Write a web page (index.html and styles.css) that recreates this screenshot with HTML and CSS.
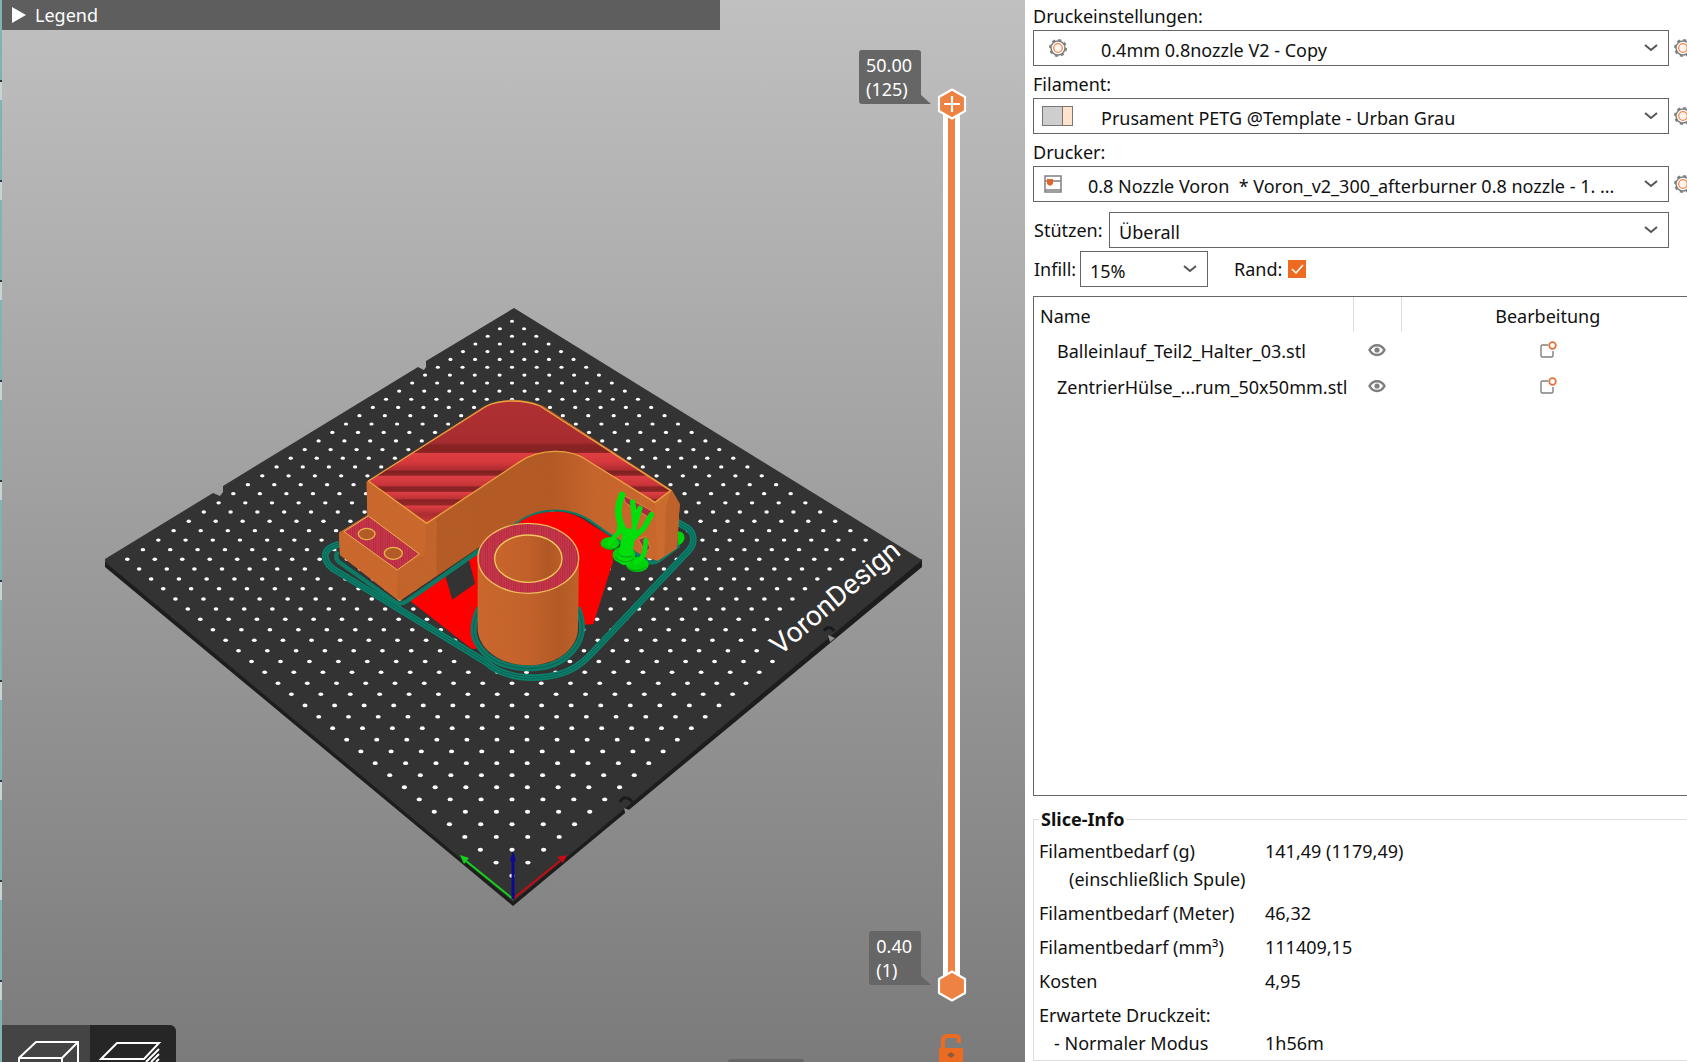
FILE: index.html
```
<!DOCTYPE html>
<html lang="de">
<head>
  <meta charset="UTF-8">
  <meta name="viewport" content="width=device-width, initial-scale=1">
  <title>Slicer</title>
  <link rel="stylesheet" href="styles.css">
</head>
<body>
  <main class="viewport">
    <svg class="scene" viewBox="0 0 1025 1062" preserveAspectRatio="xMidYMid slice">
      <defs>
        <linearGradient id="infill" gradientUnits="userSpaceOnUse" x1="0" y1="60" x2="0" y2="430">
          <stop offset="0" stop-color="#b03033"/>
          <stop offset=".34" stop-color="#a82c2f"/>
          <stop offset=".37" stop-color="#882324"/>
          <stop offset=".425" stop-color="#882324"/>
          <stop offset=".43" stop-color="#dd3e42"/>
          <stop offset=".5" stop-color="#d8393d"/>
          <stop offset=".57" stop-color="#a92c2f"/>
          <stop offset=".575" stop-color="#7d1f20"/>
          <stop offset=".61" stop-color="#8d2527"/>
          <stop offset=".62" stop-color="#dd3e42"/>
          <stop offset=".69" stop-color="#c93539"/>
          <stop offset=".71" stop-color="#8a2325"/>
          <stop offset=".74" stop-color="#8a2325"/>
          <stop offset=".75" stop-color="#dd3e42"/>
          <stop offset=".8" stop-color="#bd3235"/>
          <stop offset=".81" stop-color="#8a2325"/>
          <stop offset=".85" stop-color="#952729"/>
          <stop offset=".86" stop-color="#dd3e42"/>
          <stop offset=".93" stop-color="#a92c2f"/>
          <stop offset="1" stop-color="#d8393d"/>
        </linearGradient>
        <linearGradient id="wall" x1="0" x2="1" y1="0" y2="0">
          <stop offset="0" stop-color="#c96a2e"/>
          <stop offset=".28" stop-color="#b25925"/>
          <stop offset=".62" stop-color="#b05724"/>
          <stop offset=".75" stop-color="#c4622b"/>
          <stop offset="1" stop-color="#c8672c"/>
        </linearGradient>
        <linearGradient id="tube" x1="0" x2="1" y1="0" y2="0">
          <stop offset="0" stop-color="#c8652c"/>
          <stop offset=".5" stop-color="#c1602a"/>
          <stop offset=".8" stop-color="#b05724"/>
          <stop offset="1" stop-color="#bb5f29"/>
        </linearGradient>
        <pattern id="stripes" width="7" height="7" patternUnits="userSpaceOnUse">
          <rect width="7" height="7" fill="#d0354a"/>
          <rect width="3" height="7" fill="#a82e40"/>
        </pattern>
        <pattern id="layers" width="6" height="6" patternUnits="userSpaceOnUse" patternTransform="rotate(32)">
          <rect width="6" height="2" fill="#e08a3c" fill-opacity=".15"/>
        </pattern>
      </defs>

      <!-- Build plate -->
      <path d="M105 560v7l408 339 409-339v-8L514 888z" fill="#1d1d1d"/>
      <path d="M514 308l-88 53v6l-2 3-6-3-195 119v6l-3 4-7-3-108 66v3l408 340 409-342z" fill="#333"/>
      <path d="M824 631c3-5 8-4 10 0M620 802c3-6 9-5 12 0" fill="none" stroke="#1b1b1b" stroke-width="3"/>
      <path d="M828 635l2 7 5-4zM624 808l2 8 6-5z" fill="#8e8e8e"/>
      <g id="holes" fill="#fff"></g>
      <text class="plate-name" transform="translate(780 656) rotate(-40)">VoronDesign</text>

      <!-- Sliced parts, drawn at three times their size -->
      <g transform="translate(310 380) scale(.3333)">
        <g fill="none" stroke-linejoin="round">
          <path d="M88 492C52 502 44 515 46 530c2 20 12 32 34 43L530 848c60 58 210 62 285 0 14-12 25-21 35-33L1138 510c18-22 16-50-5-66l-32-18" stroke="#0b7f6a" stroke-width="20"/>
          <path d="M88 492C52 502 44 515 46 530c2 20 12 32 34 43L530 848c60 58 210 62 285 0 14-12 25-21 35-33L1138 510c18-22 16-50-5-66l-32-18" stroke="#0a5c4e" stroke-width="9"/>
          <path d="M88 492C52 502 44 515 46 530c2 20 12 32 34 43L530 848c60 58 210 62 285 0 14-12 25-21 35-33L1138 510c18-22 16-50-5-66l-32-18" stroke="#0b7f6a" stroke-width="5"/>
        </g>
        <path d="M300 662L480 535l125-105c60-40 150-50 210-15l94 60v70l-59 187-40 4-310 70h-15z" fill="#f00"/>
        <path d="M405 586l72-47 18 72-68 48z" fill="#333"/>
        <path d="M84 515c-8 12-8 22 4 32L258 668c12 6 20 4 32-4L508 512l102-80c60-50 160-60 230-14l70 50 94 72c14 10 30 10 44 0l60-45" fill="none" stroke="#0d7a66" stroke-width="13"/>

        <path d="M170 305L520 80c50-26 120-28 180-2L1085 330l24 42-8 132-58 38-40-10-103-72-60-42c-60-38-140-40-205-2L270 662 90 525l-3-67 85-52z" fill="url(#wall)"/>
        <path d="M170 305l180 125-4 96-83 44v90L90 525l-3-67 85-52z" fill="#c8662c"/>
        <path d="M350 430l-4 96-83 44 7 92 110-75V412z" fill="#c0622a"/>
        <path d="M1035 367l50-37 24 42-8 132-58 38z" fill="#ca6a2e"/>
        <path d="M1068 378l-5 148 38-24 8-130-24-42z" fill="#bd602a"/>
        <path d="M170 305L520 80c50-26 120-28 180-2L1085 330l24 42-8 132-58 38-40-10-103-72-60-42c-60-38-140-40-205-2L270 662 90 525l-3-67 85-52z" fill="url(#layers)"/>
        <path d="M175 303L530 78c40-20 110-20 160 0l392 254-47 35-205-127c-50-35-140-35-200 5L350 430z" fill="url(#infill)" stroke="#e9a040" stroke-width="4"/>
        <path d="M102 455l73-47 153 114-66 48z" fill="url(#stripes)" stroke="#e9b050" stroke-width="3"/>
        <g fill="#b25b26" stroke="#eab24e" stroke-width="4">
          <ellipse cx="170" cy="462" rx="25" ry="17"/>
          <ellipse cx="250" cy="520" rx="27" ry="18"/>
        </g>

        <!-- Centering sleeve -->
        <path d="M505 690c-25 60-18 95 25 135 60 50 180 55 240 5 48-40 57-85 35-140z" fill="#333" stroke="#0d7a66" stroke-width="18"/>
        <path d="M505 690c-25 60-18 95 25 135 60 50 180 55 240 5 48-40 57-85 35-140" fill="none" stroke="#0b5f51" stroke-width="3"/>
        <path d="M503 535v215c5 60 70 106 152 106s144-46 149-106l3-215z" fill="url(#tube)"/>
        <path d="M503 535v215c5 60 70 106 152 106s144-46 149-106l3-215z" fill="url(#layers)"/>
        <ellipse cx="655" cy="535" rx="151" ry="105" fill="url(#stripes)" stroke="#efbd5c" stroke-width="4"/>
        <ellipse cx="655" cy="536" rx="101" ry="71" fill="url(#tube)" stroke="#efc95c" stroke-width="4"/>

        <!-- Organic supports -->
        <path d="M938 345l88 48v25l-80-50zM985 478l22-8 14 35-14 12z" fill="#a92c45" stroke="#e9a040" stroke-width="2"/>
        <g fill="#00d20a">
          <ellipse cx="900" cy="490" rx="28" ry="19"/>
          <ellipse cx="942" cy="525" rx="34" ry="26"/>
          <ellipse cx="982" cy="553" rx="34" ry="23"/>
          <path d="M1104 454c24 0 28 34 0 42z"/>
        </g>
        <g fill="none" stroke="#00df0c" stroke-linecap="round" stroke-linejoin="round">
          <path d="M936 345c-12 28-14 60-4 85l22 50-8 50" stroke-width="20"/>
          <path d="M968 366c6 40 8 60 4 90l-24 60M990 385l-14 45M1024 404l-22 40-36 34" stroke-width="16"/>
          <path d="M898 488l28-30 4-30M975 548c25-10 32-30 32-68" stroke-width="14"/>
          <path d="M956 465l-12 70" stroke-width="40"/>
        </g>
        <path d="M880 500c12 10 30 10 42 2M915 532c16 16 40 18 58 4M952 562c18 14 42 12 56-2M922 520c10 12 30 14 44 8" fill="none" stroke="#079a10" stroke-width="3"/>
      </g>

      <!-- Axes -->
      <g fill="none" stroke-width="2">
        <path d="M513 899l-47-38" stroke="#12d21c"/>
        <path d="M513 899l47-38" stroke="#c80a14"/>
        <path d="M513 899v-40" stroke="#0a0a96" stroke-width="3"/>
      </g>
      <path d="M460 855l9 3-5 6z" fill="#12d21c"/>
      <path d="M567 855l-10 2 6 6z" fill="#c80a14"/>
      <path d="M513 851l-3 10h6z" fill="#0a0a96"/>
    </svg>

    <div class="window-edge"></div>
    <button class="legend-bar" type="button"><span class="arrow"></span>Legend</button>

    <div class="layer-slider">
      <div class="track"></div>
      <input class="lower" type="range" min="1" max="125" value="1" aria-label="Untere Schicht">
      <input class="upper" type="range" min="1" max="125" value="125" aria-label="Obere Schicht">
      <output class="tip tip-top">50.00<br>(125)</output>
      <output class="tip tip-bottom">0.40<br>(1)</output>
    </div>
    <button class="lock" type="button" aria-label="Sperre">
      <svg viewBox="0 0 26 28">
        <path d="M5 15V6q0-4 4-4h8q4 0 4 4v3" fill="none" stroke="#ed6b21" stroke-width="4"/>
        <rect x="1" y="14" width="24" height="14" fill="#ed6b21"/>
        <path d="M9 21l4-3 4 3-4 3z" fill="#8a5a3c"/>
      </svg>
    </button>

    <div class="view-switch">
      <button type="button" aria-label="3D-Ansicht">
        <svg viewBox="0 0 88 37"><path d="M17 50V33L34 17H76V50M17 33H60V50M60 33L76 17" fill="none" stroke="#fff" stroke-width="2"/></svg>
      </button>
      <button class="active" type="button" aria-label="Vorschau">
        <svg viewBox="0 0 86 37"><path d="M11 34L27 18H69L54 34zM56 37L69 24M61 37L69 29M66 37l3-3" fill="none" stroke="#fff" stroke-width="2"/></svg>
      </button>
    </div>
    <div class="moves-tab"></div>
  </main>

  <aside class="panel">
    <svg class="symbols">
      <symbol id="gear" viewBox="0 0 18 18">
        <circle cx="9" cy="9" r="7" fill="none" stroke="#808080" stroke-width="1.5"/>
        <circle cx="9" cy="9" r="8" fill="none" stroke="#808080" stroke-width="2" stroke-dasharray="3.14 3.14"/>
        <circle cx="9" cy="9" r="4.3" fill="#fff4ec" stroke="#ed8b55" stroke-width="1.3"/>
      </symbol>
      <symbol id="chevron" viewBox="0 0 16 10">
        <path d="M2 2l6 5 6-5" fill="none" stroke="#555" stroke-width="2"/>
      </symbol>
      <symbol id="eye" viewBox="0 0 18 14">
        <path d="M1.5 7C5 .5 13 .5 16.5 7 13 13.5 5 13.5 1.5 7z" fill="none" stroke="#808080" stroke-width="2.5"/>
        <circle cx="9" cy="7" r="2.6" fill="#808080"/>
      </symbol>
      <symbol id="edit" viewBox="0 0 18 18">
        <path d="M9 4H3.5Q2 4 2 5.5v9Q2 16 3.5 16h9q1.500 0 1.500-1.500V10" fill="none" stroke="#808080" stroke-width="1.4"/>
        <circle cx="13.5" cy="4.5" r="3.3" fill="#fff" stroke="#e0753c" stroke-width="1.8"/>
      </symbol>
    </svg>

    <div class="field">
      <label for="print">Druckeinstellungen:</label>
      <div class="row">
        <div class="combo">
          <svg class="icon"><use href="#gear"/></svg>
          <select id="print"><option>0.4mm 0.8nozzle V2 - Copy</option></select>
          <svg class="chevron"><use href="#chevron"/></svg>
        </div>
        <button class="gear" type="button" aria-label="Druckeinstellungen bearbeiten"><svg><use href="#gear"/></svg></button>
      </div>
    </div>
    <div class="field">
      <label for="filament">Filament:</label>
      <div class="row">
        <div class="combo">
          <span class="swatch"></span>
          <select id="filament"><option>Prusament PETG @Template - Urban Grau</option></select>
          <svg class="chevron"><use href="#chevron"/></svg>
        </div>
        <button class="gear" type="button" aria-label="Filament bearbeiten"><svg><use href="#gear"/></svg></button>
      </div>
    </div>
    <div class="field">
      <label for="printer">Drucker:</label>
      <div class="row">
        <div class="combo printer">
          <svg class="icon" viewBox="0 0 18 18">
            <path d="M1 1h16v16H1zM1 6h16M1 15h16" fill="none" stroke="#808080" stroke-width="1.5"/>
            <path d="M3 4h6v5L6 11 3 9z" fill="#e0662c"/>
          </svg>
          <select id="printer"><option>0.8 Nozzle Voron&nbsp; * Voron_v2_300_afterburner 0.8 nozzle - 1. ...</option></select>
          <svg class="chevron"><use href="#chevron"/></svg>
        </div>
        <button class="gear" type="button" aria-label="Drucker bearbeiten"><svg><use href="#gear"/></svg></button>
      </div>
    </div>

    <div class="line supports">
      <label for="supports">Stützen:</label>
      <div class="combo plain">
        <select id="supports"><option>Überall</option></select>
        <svg class="chevron"><use href="#chevron"/></svg>
      </div>
    </div>
    <div class="line infill">
      <label for="infill-amount">Infill:</label>
      <div class="combo plain">
        <select id="infill-amount"><option>15%</option></select>
        <svg class="chevron"><use href="#chevron"/></svg>
      </div>
      <label class="brim">Rand: <input type="checkbox" checked></label>
    </div>

    <div class="objects">
      <table>
        <thead>
          <tr><th class="name">Name</th><th class="visible"></th><th>Bearbeitung</th></tr>
        </thead>
        <tbody>
          <tr>
            <td class="name">Balleinlauf_Teil2_Halter_03.stl</td>
            <td><svg class="eye"><use href="#eye"/></svg></td>
            <td><svg class="edit"><use href="#edit"/></svg></td>
          </tr>
          <tr>
            <td class="name">ZentrierHülse_...rum_50x50mm.stl</td>
            <td><svg class="eye"><use href="#eye"/></svg></td>
            <td><svg class="edit"><use href="#edit"/></svg></td>
          </tr>
        </tbody>
      </table>
    </div>

    <fieldset class="slice-info">
      <legend>Slice-Info</legend>
      <dl>
        <dt>Filamentbedarf (g)<span class="spool">(einschließlich Spule)</span></dt><dd>141,49 (1179,49)</dd>
        <dt>Filamentbedarf (Meter)</dt><dd>46,32</dd>
        <dt>Filamentbedarf (mm³)</dt><dd>111409,15</dd>
        <dt>Kosten</dt><dd>4,95</dd>
        <dt>Erwartete Druckzeit:<span class="mode">- Normaler Modus</span></dt><dd class="last">1h56m</dd>
      </dl>
    </fieldset>
  </aside>

  <script>
    // Holes of the plate: a 29 x 29 grid seen in perspective
    const holes = document.getElementById('holes');
    const count = 29;

    for (let i = 0; i < count; i++) {
      for (let j = 0; j < count; j++) {
        // the plate name takes the end of the last two rows
        if (j > 26 && i < 10) continue;
        const w = 1 - 0.004425 * (i + j);
        const hole = document.createElementNS('http://www.w3.org/2000/svg', 'ellipse');
        hole.setAttribute('cx', 512 + 12.037 * (j - i) / w);
        hole.setAttribute('cy', (321.3 + 6.025 * (i + j)) / w);
        hole.setAttribute('rx', 2 / w);
        hole.setAttribute('ry', 1.5 / w);
        holes.appendChild(hole);
      }
    }
  </script>
</body>
</html>
```
FILE: styles.css
```
* {
  box-sizing: border-box;
}
body {
  margin: 0;
  height: 100vh;
  display: grid;
  grid-template-columns: 1025fr 662fr;
  font-family: "Noto Sans", "Open Sans", sans-serif;
  font-size: 18px;
  line-height: 28px;
  color: #111;
  background: #fff;
  overflow: hidden;
}
button {
  border: none;
  padding: 0;
  background: none;
  font: inherit;
  cursor: pointer;
}
svg {
  display: block;
}

/* 3D view */
.viewport {
  position: relative;
  min-width: 0;
  overflow: hidden;
  background: linear-gradient(#c0c0c0, #7b7b7b);
}
.scene {
  width: 100%;
  height: 100%;
}
.plate-name {
  font-family: Roboto, sans-serif;
  font-size: 28px;
  fill: #fff;
}
.window-edge {
  position: absolute;
  left: 0;
  top: 0;
  bottom: 0;
  width: 2px;
  background: repeating-linear-gradient(#7fb4b4 0 80px, #333 80px 82px, #c8d4d4 82px 100px);
}
.legend-bar {
  position: absolute;
  left: 2px;
  top: 0;
  width: 70%;
  height: 30px;
  display: flex;
  align-items: center;
  gap: 9px;
  padding-left: 10px;
  background: #5e5e5e;
  color: #fff;
}
.arrow {
  border-left: 14px solid #fff;
  border-top: 8px solid transparent;
  border-bottom: 8px solid transparent;
}

/* Layer slider */
.layer-slider {
  position: absolute;
  right: 58px;
  top: 88px;
  bottom: 60px;
  width: 30px;
}
.track {
  position: absolute;
  left: 6px;
  top: 16px;
  bottom: 16px;
  width: 17px;
  border: solid #fff;
  border-width: 0 5px;
  background: #ed8243;
}
.layer-slider input {
  position: absolute;
  left: 0;
  top: 0;
  width: 30px;
  height: 100%;
  margin: 0;
  appearance: none;
  background: none;
  writing-mode: vertical-lr;
  direction: rtl;
  pointer-events: none;
}
.layer-slider input::-webkit-slider-thumb {
  appearance: none;
  width: 30px;
  height: 32px;
  pointer-events: auto;
  background: url("data:image/svg+xml,%3Csvg xmlns='http://www.w3.org/2000/svg' viewBox='0 0 30 32'%3E%3Cpath d='M15 1.5L28 9v14l-13 7.5L2 23V9z' fill='%23ed8243' stroke='%23fff' stroke-width='2.2' stroke-linejoin='round'/%3E%3C/svg%3E");
}
.layer-slider .upper::-webkit-slider-thumb {
  background: url("data:image/svg+xml,%3Csvg xmlns='http://www.w3.org/2000/svg' viewBox='0 0 30 32'%3E%3Cpath d='M15 1.5L28 9v14l-13 7.5L2 23V9z' fill='%23ed8243' stroke='%23fff' stroke-width='2.2' stroke-linejoin='round'/%3E%3Cpath d='M7 16h16M15 8v16' stroke='%23fff' stroke-width='2.2'/%3E%3C/svg%3E");
}
.tip {
  position: absolute;
  right: 46px;
  height: 54px;
  padding: 3px 9px 3px 7px;
  border-radius: 3px 3px 0 3px;
  background: #666;
  color: #fff;
  line-height: 24px;
}
.tip::after {
  content: "";
  position: absolute;
  left: 100%;
  bottom: 0;
  border-left: 10px solid #666;
  border-top: 9px solid transparent;
}
.tip-top {
  bottom: calc(100% - 16px);
}
.tip-bottom {
  bottom: 17px;
}
.lock {
  position: absolute;
  right: 61px;
  bottom: 0;
  width: 26px;
  height: 28px;
}

/* Bottom tools */
.view-switch {
  position: absolute;
  left: 2px;
  bottom: 0;
  display: flex;
  height: 37px;
  overflow: hidden;
  border-top-right-radius: 6px;
}
.view-switch button {
  width: 88px;
  background: #444;
}
.view-switch .active {
  width: 86px;
  background: #262626;
}
.moves-tab {
  position: absolute;
  left: 71%;
  bottom: 0;
  width: 76px;
  height: 3px;
  border-radius: 3px 3px 0 0;
  background: #666;
}

/* Settings panel */
.panel {
  min-width: 0;
  min-height: 0;
  display: flex;
  flex-direction: column;
  padding-left: 8px;
  overflow: hidden;
}
.symbols {
  position: absolute;
  width: 0;
  height: 0;
}
.field label {
  display: block;
  padding-top: 2px;
}
.field + .field {
  margin-top: 2px;
}
.row {
  display: flex;
  align-items: center;
  gap: 5px;
  margin-right: -5px;
}
.gear,
.gear svg {
  flex: none;
  width: 18px;
  height: 18px;
}
.combo {
  position: relative;
  flex: 1;
  min-width: 0;
  height: 36px;
}
.combo select {
  width: 100%;
  height: 36px;
  padding: 4px 32px 0 67px;
  appearance: none;
  border: 1px solid #666;
  border-radius: 0;
  background: #fff;
  color: #111;
  font: inherit;
}
.combo.printer select {
  padding-left: 54px;
}
.combo.plain select {
  padding-left: 9px;
}
.combo .icon {
  position: absolute;
  left: 16px;
  top: 9px;
  width: 18px;
  height: 18px;
}
.combo.printer .icon {
  left: 11px;
}
.combo .swatch {
  position: absolute;
  left: 9px;
  top: 8px;
  width: 31px;
  height: 20px;
  border: 1px solid #777;
  background: linear-gradient(90deg, #cecece 19px, #777 19px 20px, #ffe3cc 20px);
}
.combo .chevron {
  position: absolute;
  right: 10px;
  top: 13px;
  width: 16px;
  height: 10px;
  pointer-events: none;
}
.line {
  display: flex;
  align-items: center;
  margin-right: 18px;
}
.line > label {
  padding-left: 1px;
}
.supports {
  margin-top: 10px;
}
.supports label {
  width: 76px;
}
.infill {
  margin-top: 3px;
}
.infill label {
  width: 47px;
}
.infill .combo {
  flex: none;
  width: 128px;
}
.infill .brim {
  display: flex;
  align-items: center;
  gap: 6px;
  width: auto;
  margin-left: 25px;
}
.brim input {
  width: 18px;
  height: 18px;
  margin: 0;
  appearance: none;
  background: #ed6b21 url("data:image/svg+xml,%3Csvg xmlns='http://www.w3.org/2000/svg' viewBox='0 0 18 18'%3E%3Cpath d='M4 9l4 4 7-8' fill='none' stroke='%23fff' stroke-width='1.5'/%3E%3C/svg%3E");
}

/* Object list */
.objects {
  flex: 1;
  min-height: 0;
  margin: 9px -8px 9px 0;
  border: 1px solid #666;
}
table {
  width: 100%;
  table-layout: fixed;
  border-collapse: collapse;
}
th {
  height: 35px;
  padding: 2px 0 0;
  font-weight: normal;
}
td {
  height: 36px;
  padding: 0;
}
th.name {
  width: 319px;
  padding-left: 6px;
  text-align: left;
}
th.visible {
  width: 48px;
  border: solid #ddd;
  border-width: 0 1px;
}
td.name {
  padding: 2px 0 0 23px;
  white-space: nowrap;
}
.eye,
.edit {
  margin: 0 auto;
  width: 18px;
  height: 14px;
}
.edit {
  height: 18px;
}

/* Slice info */
.slice-info {
  margin: 0 -8px 1px 0;
  padding: 4px 0 3px 5px;
  border: 1px solid #ddd;
}
legend {
  padding: 0 2px;
  font-weight: bold;
}
dl {
  display: grid;
  grid-template-columns: 226px 1fr;
  row-gap: 6px;
  margin: 0;
}
dt span {
  display: block;
}
.spool {
  padding-left: 30px;
}
.mode {
  padding-left: 15px;
}
dd {
  margin: 0;
}
dd.last {
  align-self: end;
}
```
